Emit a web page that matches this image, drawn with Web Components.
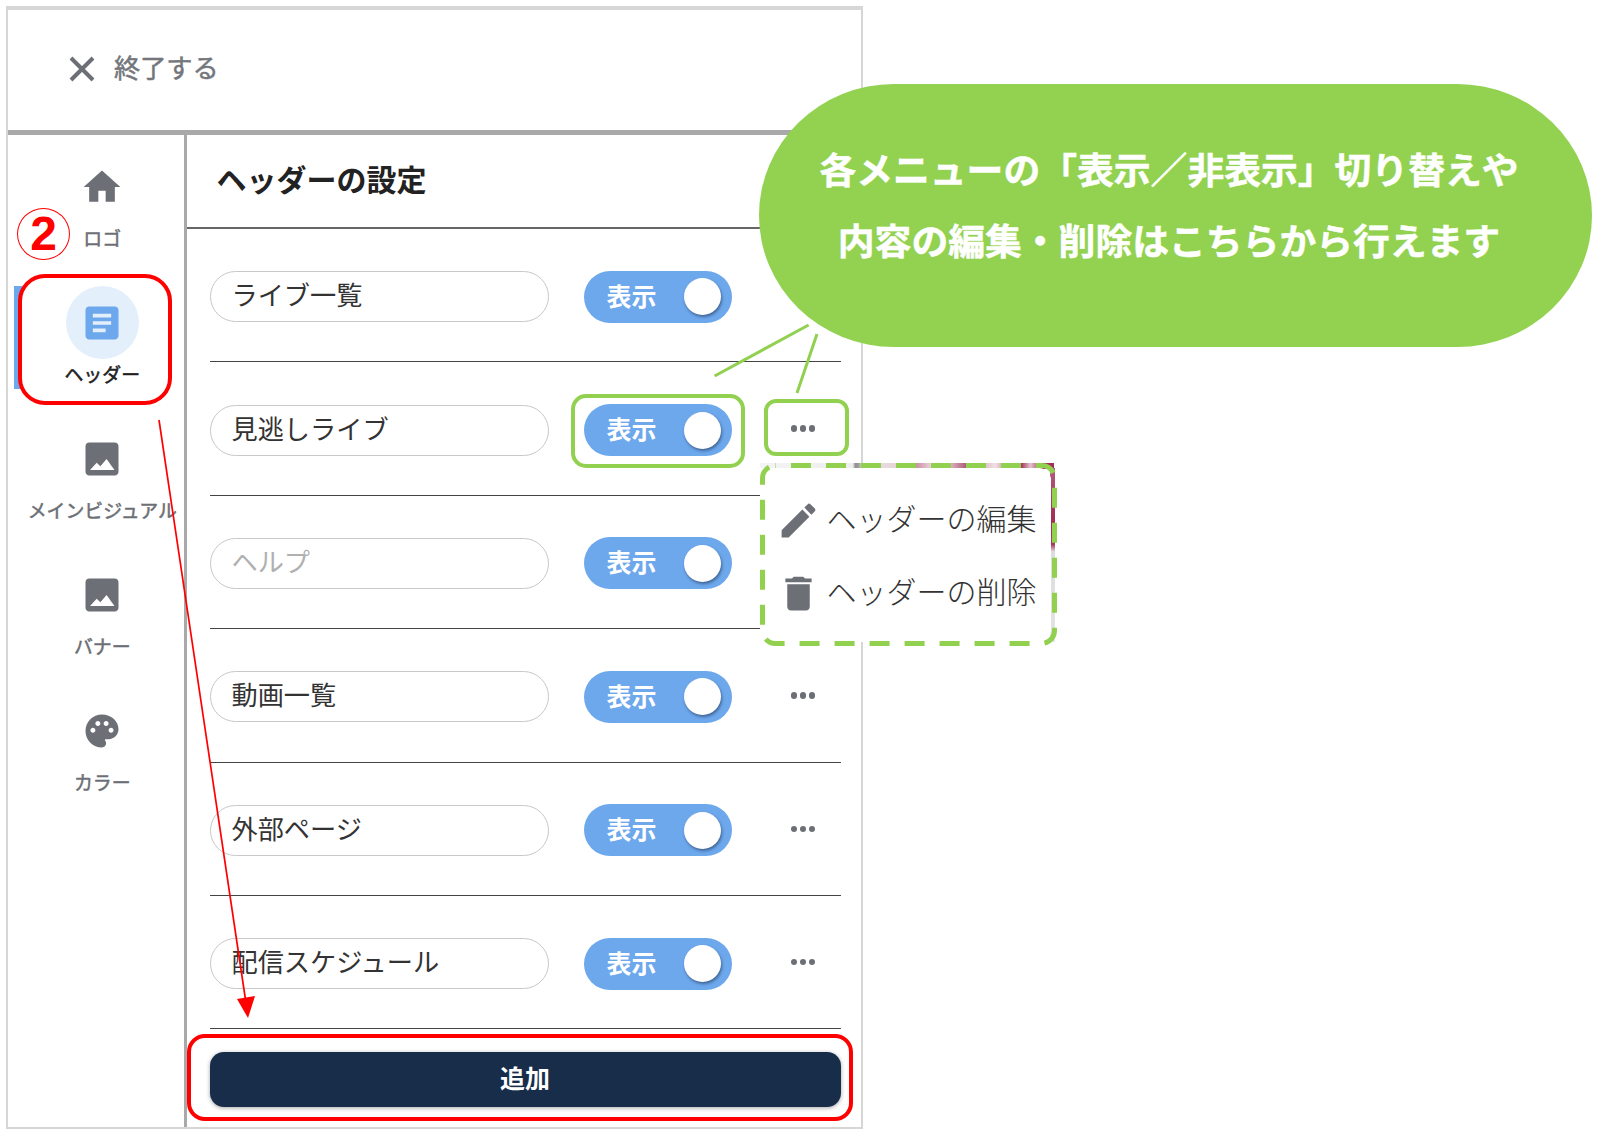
<!DOCTYPE html>
<html lang="ja">
<head>
<meta charset="utf-8">
<title>ヘッダーの設定</title>
<style>
  html, body { margin: 0; padding: 0; background: #fff; }
  body {
    position: relative; width: 1601px; height: 1135px; overflow: hidden;
    font-family: "Noto Sans CJK JP", "Noto Sans", sans-serif;
  }
</style>
</head>
<body>

<template id="appPanel">
  <style>
    :host {
      display: flex; flex-direction: column; box-sizing: border-box;
      width: 857px; height: 1123px; margin: 6px 0 0 6px;
      border: 2.5px solid #d6d6d6; border-top-width: 4px; background: #fff;
    }
    .body { flex: 1; display: flex; min-height: 0; }
  </style>
  <slot name="top"></slot>
  <div class="body">
    <slot name="side"></slot>
    <slot name="main"></slot>
  </div>
</template>

<template id="closeBar">
  <style>
    :host {
      display: flex; align-items: center; box-sizing: border-box; flex: none;
      height: 125px; padding: 0 0 6px 60px;
      border-bottom: 5px solid #a9a9a9; color: #73767b;
    }
    svg { width: 28px; height: 28px; margin-top: 4px; }
    span { margin-left: 18px; font-size: 26.2px; line-height: 30px; -webkit-text-stroke: .5px currentColor; }
  </style>
  <svg viewBox="0 0 28 28"><path d="M3 3L25 25M25 3L3 25" stroke="#6c6f75" stroke-width="4" fill="none"/></svg>
  <span><slot></slot></span>
</template>

<template id="sideNav">
  <style>
    :host {
      display: block; box-sizing: border-box; flex: none; width: 179px;
      padding: 29.5px 0 0 12.5px; border-right: 3.5px solid #a9a9a9;
    }
  </style>
  <slot></slot>
</template>

<template id="navItem">
  <style>
    :host {
      display: flex; flex-direction: column; align-items: center; position: relative;
      height: 136px; color: #6c6f75; font-size: 18.9px;
    }
    :host([active]) { color: #222; }
    .bar, .halo { display: none; position: absolute; }
    :host([active]) .bar { display: block; left: -7px; top: -14.5px; width: 8px; height: 103px; background: #6da7ec; }
    :host([active]) .halo { display: block; left: 45.5px; top: -14.5px; width: 73px; height: 73px; border-radius: 50%; background: #e3f0fb; }
    ::slotted(svg) { position: relative; width: 44px; height: 44px; }
    .label { position: relative; margin-top: 17.5px; line-height: 24px; white-space: nowrap; -webkit-text-stroke: .5px currentColor; }
  </style>
  <div class="bar"></div>
  <div class="halo"></div>
  <slot name="icon"></slot>
  <div class="label"><slot></slot></div>
</template>

<template id="settingsPane">
  <style>
    :host { display: block; flex: 1; min-width: 0; padding: 0 20.5px 0 22.5px; }
    h2 {
      box-sizing: border-box; height: 94px; margin: 0 -20.5px 0 -22.5px; padding: 0 0 6px 29.5px;
      display: flex; align-items: center;
      font-size: 30px; font-weight: 700; color: #222;
      border-bottom: 2px solid #666;
    }
  </style>
  <h2><slot name="title"></slot></h2>
  <slot></slot>
</template>

<template id="menuRow">
  <style>
    :host {
      display: flex; align-items: center; box-sizing: border-box;
      height: 133.4px; padding-top: 3px; border-bottom: 1.5px solid #444;
    }
    .field {
      box-sizing: border-box; width: 339.5px; height: 51px; padding: 0 0 5px 21px; flex: none;
      display: flex; align-items: center;
      border: 1.5px solid #c8c8c8; border-radius: 25.5px;
      font-size: 26.2px; font-weight: 400; color: #333; white-space: nowrap;
    }
    :host([hint]) .field { color: #b0b0b0; }
    ::slotted(toggle-switch) { margin-left: 35px; }
    ::slotted(more-dots) { margin-left: 41px; }
  </style>
  <div class="field"><slot></slot></div>
  <slot name="controls"></slot>
</template>

<template id="toggleSwitch">
  <style>
    :host {
      display: flex; align-items: center; justify-content: space-between; box-sizing: border-box;
      width: 148px; height: 52px; padding: 0 11px 0 22.5px; flex: none;
      border-radius: 26px; background: #6da7ec; color: #fff;
      font-size: 25px; font-weight: 700;
    }
    span { margin-top: -4px; }
    .knob { width: 37px; height: 37px; border-radius: 50%; background: #fff; box-shadow: 1px 2px 3px rgba(30,50,80,.55); }
  </style>
  <span><slot></slot></span>
  <div class="knob"></div>
</template>

<template id="moreDots">
  <style>
    :host { display: flex; justify-content: center; gap: 2.5px; width: 60px; flex: none; margin-top: -3px; }
    i { width: 6.5px; height: 6.5px; border-radius: 50%; background: #6c6f75; }
  </style>
  <i></i><i></i><i></i>
</template>

<template id="addButton">
  <style>
    :host {
      display: flex; align-items: center; justify-content: center; box-sizing: border-box;
      height: 55px; margin-top: 23px; padding-bottom: 6px; border-radius: 14px;
      background: #182d4a; color: #fff; font-size: 25px; font-weight: 700;
      box-shadow: 0 1px 4px rgba(0,0,0,.35);
    }
  </style>
  <slot></slot>
</template>

<template id="popupMenu">
  <style>
    :host { display: block; position: absolute; left: 760px; top: 463px; width: 297px; height: 183px; }
    .top {
      position: absolute; left: 0; top: 0; width: 294px; height: 6px;
      background: linear-gradient(90deg, #f4f4f4 0, #eee 31.5%, #8f8f8f 32.5%, #9d9d9d 33.5%, #e9e6e6 35%, #e6d4d9 46%, #f2eaec 50%, #c98ea3 53%, #e9cfd8 58%, #f1e3e7 62%, #b35c7a 70%, #d9a9b9 74%, #efe0e4 80%, #c98ea3 84%, #a93a60 89%, #e3c3cf 92%, #a32e57 96%, #a32e57 100%);
    }
    .right {
      position: absolute; left: 290px; top: 5px; width: 4.5px; height: 174px;
      background: linear-gradient(180deg, #b25c7c 0, #a63a60 20%, #a32e57 30%, #a63a60 44%, #ddd 48%, #e4e4e4 100%);
    }
    .card {
      position: absolute; left: 0; top: 5px; box-sizing: border-box;
      width: 291px; height: 174px; padding: 16px 0 0 15.5px;
      background: #fff; border-radius: 0 12px 12px 0;
    }
    svg.dash { position: absolute; left: 0; top: 0; width: 297px; height: 183px; overflow: visible; }
  </style>
  <div class="top"></div>
  <div class="right"></div>
  <div class="card"><slot></slot></div>
  <svg class="dash" viewBox="0 0 297 183">
    <rect x="2.5" y="2.5" width="292" height="178" rx="13" fill="none" stroke="#92d050" stroke-width="5" stroke-dasharray="20 15" stroke-dashoffset="-15.5"/>
  </svg>
</template>

<template id="menuEntry">
  <style>
    :host {
      display: flex; align-items: center; height: 73px;
      font-size: 30px; font-weight: 300; color: #333; white-space: nowrap;
    }
    ::slotted(svg) { width: 45px; height: 45px; margin-right: 6px; flex: none; }
    span { margin-top: -7px; }
  </style>
  <slot name="icon"></slot>
  <span><slot></slot></span>
</template>

<template id="noteBubble">
  <style>
    :host {
      display: flex; flex-direction: column; align-items: center; justify-content: center;
      position: absolute; left: 759px; top: 84px; box-sizing: border-box;
      width: 833px; height: 263px; padding: 0 13px 23px 0;
      border-radius: 135px / 131.5px; background: #92d250; color: #fff;
      font-size: 36.8px; font-weight: 700; line-height: 71px; white-space: nowrap;
      -webkit-text-stroke: .5px #fff;
    }
  </style>
  <slot></slot>
</template>

<template id="noteBox">
  <style>
    :host { display: block; position: absolute; box-sizing: border-box; border-style: solid; pointer-events: none; }
  </style>
</template>

<template id="stepMark">
  <style>
    :host {
      display: flex; align-items: center; justify-content: center;
      position: absolute; left: 17px; top: 208px; box-sizing: border-box;
      width: 53px; height: 52px; border: 1.5px solid #f00; border-radius: 50%;
      color: #f00; font: 700 48px/48px "Liberation Sans", sans-serif;
    }
  </style>
  <slot></slot>
</template>

<template id="noteLines">
  <style>
    :host { display: block; position: absolute; left: 0; top: 0; width: 1601px; height: 1135px; pointer-events: none; }
    svg { display: block; }
  </style>
  <svg width="1601" height="1135" viewBox="0 0 1601 1135">
    <path d="M808.6 325L714.6 376M817 334L797 393" stroke="#92d050" stroke-width="3" fill="none"/>
    <path d="M159 420L246 1003" stroke="#f00" stroke-width="1.7" fill="none"/>
    <path d="M248 1018L237 999L255 996z" fill="#f00"/>
  </svg>
</template>

<app-panel>
  <close-bar slot="top">終了する</close-bar>

  <side-nav slot="side">
    <nav-item><svg slot="icon" viewBox="0 0 24 24"><path fill="#6c6f75" d="M10 20v-6h4v6h5v-8h3L12 3 2 12h3v8z"/></svg>ロゴ</nav-item>
    <nav-item active><svg slot="icon" viewBox="0 0 24 24"><path fill="#6da7ec" d="M19 3H5c-1.1 0-2 .9-2 2v14c0 1.1.9 2 2 2h14c1.1 0 2-.9 2-2V5c0-1.1-.9-2-2-2zm-5 14H7v-2h7v2zm3-4H7v-2h10v2zm0-4H7V7h10v2z"/></svg>ヘッダー</nav-item>
    <nav-item><svg slot="icon" viewBox="0 0 24 24"><path fill="#6c6f75" fill-rule="evenodd" d="M21 19V5c0-1.1-.9-2-2-2H5c-1.1 0-2 .9-2 2v14c0 1.1.9 2 2 2h14c1.1 0 2-.9 2-2zM5.5 18l3.6-4 2 2 3.4-4 4.3 6z"/></svg>メインビジュアル</nav-item>
    <nav-item><svg slot="icon" viewBox="0 0 24 24"><path fill="#6c6f75" fill-rule="evenodd" d="M21 19V5c0-1.1-.9-2-2-2H5c-1.1 0-2 .9-2 2v14c0 1.1.9 2 2 2h14c1.1 0 2-.9 2-2zM5.5 18l3.6-4 2 2 3.4-4 4.3 6z"/></svg>バナー</nav-item>
    <nav-item><svg slot="icon" viewBox="-1.33 -1.33 26.67 26.67"><path fill="#6c6f75" d="M12 2C6.49 2 2 6.49 2 12s4.49 10 10 10c1.38 0 2.5-1.12 2.5-2.5 0-.61-.23-1.2-.64-1.67-.08-.1-.13-.21-.13-.33 0-.28.22-.5.5-.5H16c3.31 0 6-2.69 6-6 0-4.96-4.49-9-10-9zm5.5 11c-.83 0-1.5-.67-1.5-1.5s.67-1.5 1.5-1.5 1.5.67 1.5 1.5-.67 1.5-1.5 1.5zm-3-4c-.83 0-1.5-.67-1.5-1.5S13.67 6 14.5 6s1.5.67 1.5 1.5S15.33 9 14.5 9zM5 11.5c0-.83.67-1.5 1.5-1.5s1.5.67 1.5 1.5S7.33 13 6.5 13 5 12.33 5 11.5zm6-4c0 .83-.67 1.5-1.5 1.5S8 8.33 8 7.5 8.67 6 9.5 6s1.5.67 1.5 1.5z"/></svg>カラー</nav-item>
  </side-nav>

  <settings-pane slot="main">
    <span slot="title">ヘッダーの設定</span>
    <menu-row>ライブ一覧<toggle-switch slot="controls">表示</toggle-switch></menu-row>
    <menu-row>見逃しライブ<toggle-switch slot="controls">表示</toggle-switch><more-dots slot="controls"></more-dots></menu-row>
    <menu-row hint>ヘルプ<toggle-switch slot="controls">表示</toggle-switch></menu-row>
    <menu-row>動画一覧<toggle-switch slot="controls">表示</toggle-switch><more-dots slot="controls"></more-dots></menu-row>
    <menu-row>外部ページ<toggle-switch slot="controls">表示</toggle-switch><more-dots slot="controls"></more-dots></menu-row>
    <menu-row>配信スケジュール<toggle-switch slot="controls">表示</toggle-switch><more-dots slot="controls"></more-dots></menu-row>
    <add-button>追加</add-button>
  </settings-pane>
</app-panel>

<popup-menu>
  <menu-entry><svg slot="icon" viewBox="0 0 24 24"><path fill="#6c6f75" d="M3 17.25V21h3.75L17.81 9.94l-3.75-3.75L3 17.25zM20.71 7.04c.39-.39.39-1.02 0-1.41l-2.34-2.34c-.39-.39-1.02-.39-1.41 0l-1.83 1.83 3.75 3.75 1.83-1.83z"/></svg>ヘッダーの編集</menu-entry>
  <menu-entry><svg slot="icon" viewBox="0 0 24 24"><path fill="#6c6f75" d="M6 19c0 1.1.9 2 2 2h8c1.1 0 2-.9 2-2V7H6v12zM19 4h-3.5l-1-1h-5l-1 1H5v2h14V4z"/></svg>ヘッダーの削除</menu-entry>
</popup-menu>

<note-lines></note-lines>
<note-bubble>
  <div>各メニューの「表示／非表示」切り替えや</div>
  <div>内容の編集・削除はこちらから行えます</div>
</note-bubble>
<note-box x="571" y="394" w="174" h="74" color="#92d050" weight="4.5" radius="15"></note-box>
<note-box x="764" y="399" w="85" h="57" color="#92d050" weight="4.5" radius="12"></note-box>
<note-box x="18" y="274" w="154" h="131" color="#f00" weight="4.5" radius="27"></note-box>
<note-box x="187" y="1034" w="666" h="87" color="#f00" weight="4.5" radius="18"></note-box>
<step-mark>2</step-mark>

<script>
  // every element just clones its template into an open shadow root
  class TemplateElement extends HTMLElement {
    constructor (id) {
      super();
      const t = document.querySelector('#' + id);
      this.attachShadow({mode: 'open'}).appendChild(t.content.cloneNode(true));
    }
  }

  class NoteBox extends TemplateElement {
    constructor () { super('noteBox'); }
    connectedCallback () {
      const a = (n) => this.getAttribute(n);
      this.style.left = a('x') + 'px';
      this.style.top = a('y') + 'px';
      this.style.width = a('w') + 'px';
      this.style.height = a('h') + 'px';
      this.style.borderColor = a('color');
      this.style.borderWidth = a('weight') + 'px';
      this.style.borderRadius = a('radius') + 'px';
    }
  }
  window.customElements.define('note-box', NoteBox);

  const simple = {
    'app-panel': 'appPanel', 'close-bar': 'closeBar', 'side-nav': 'sideNav', 'nav-item': 'navItem',
    'settings-pane': 'settingsPane', 'menu-row': 'menuRow', 'toggle-switch': 'toggleSwitch',
    'more-dots': 'moreDots', 'add-button': 'addButton', 'popup-menu': 'popupMenu',
    'menu-entry': 'menuEntry', 'note-bubble': 'noteBubble', 'step-mark': 'stepMark', 'note-lines': 'noteLines'
  };
  for (const name in simple) {
    window.customElements.define(name, class extends TemplateElement {
      constructor () { super(simple[name]); }
    });
  }
</script>
</body>
</html>
